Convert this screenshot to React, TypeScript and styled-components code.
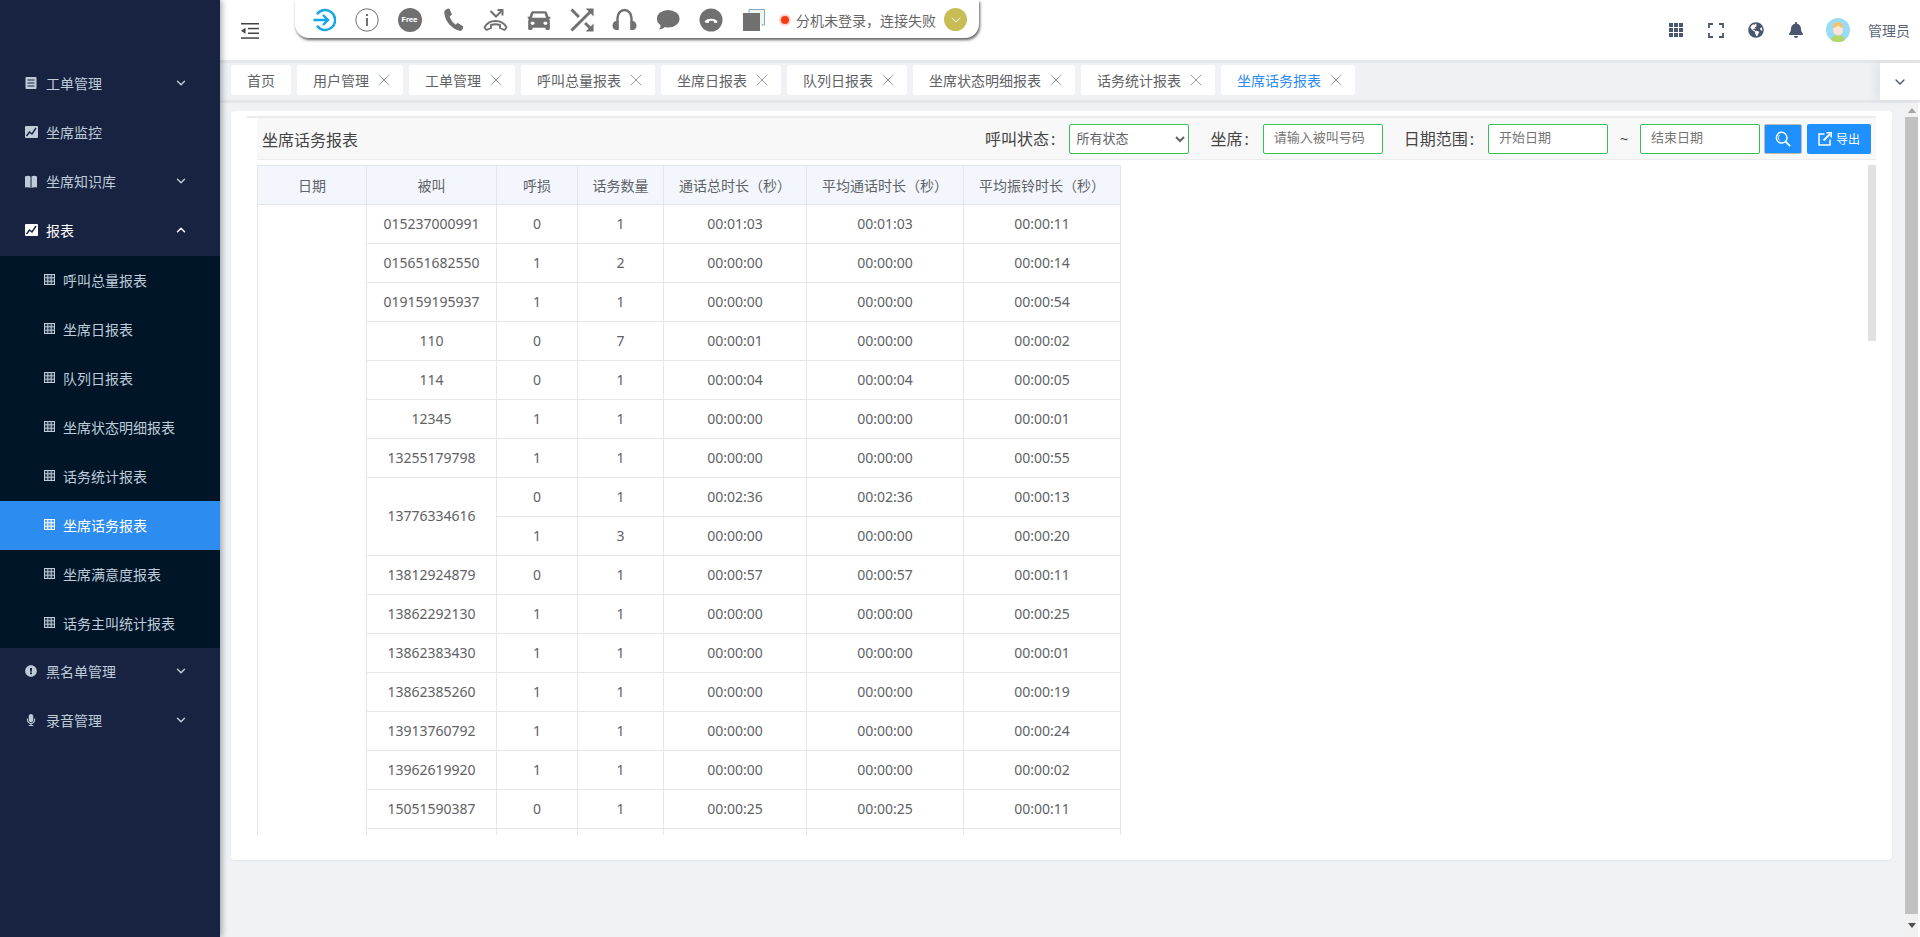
import React from "react";
import styled, {createGlobalStyle} from "styled-components";
import {ChevronDown, ChevronUp, X} from "lucide-react";
import {FaBell, FaExclamationCircle, FaGlobeAmericas, FaMicrophone} from "react-icons/fa";

const GlobalStyle = createGlobalStyle`
  html, body {
    margin: 0;
    height: 100%;
    overflow: hidden;
  }

  body {
    font-family: "Noto Sans", "Noto Sans CJK SC", sans-serif;
    font-size: 14px;
    color: #606266;
    background: #f0f2f5;
  }

  * {
    box-sizing: border-box;
  }
`

// icons
const GRAY = "#707070";

const DocIcon = () => (
    <svg width="12" height="12" viewBox="0 0 12 12">
        <rect x="0.5" width="11" height="12" rx="1" fill="currentColor"/>
        <path d="M2.5 3h7M2.5 6h7M2.5 9h7" stroke="#172340" strokeWidth="1"/>
    </svg>
);

const ChartIcon = () => (
    <svg width="13" height="12" viewBox="0 0 13 12">
        <rect width="13" height="12" rx="1" fill="currentColor"/>
        <path d="M1.5 10l3-4 2.5 2 4-6" stroke="#172340" strokeWidth="1.4" fill="none"/>
    </svg>
);

const BookIcon = () => (
    <svg width="12" height="13" viewBox="0 0 12 13" fill="currentColor">
        <path d="M0 1.500C2 .5 4 .5 5.500 1.500V13C4 12 2 12 0 12.500z"/>
        <path d="M12 1.500C10 .5 8 .5 6.500 1.500V13C8 12 10 12 12 12.500z"/>
    </svg>
);

const TableIcon = () => (
    <svg width="11" height="11" viewBox="0 0 11 11" fill="none" stroke="currentColor" strokeWidth="1">
        <rect x=".5" y=".5" width="10" height="10" fill="currentColor" fillOpacity=".2"/>
        <path d="M.5 3.800h10M.5 7.200h10M3.800.5v10M7.200.5v10"/>
    </svg>
);

const LoginIcon = () => (
    <svg width="24" height="24" viewBox="0 0 24 24" fill="none" stroke="#13a7ea" strokeWidth="2.4">
        <path d="M5 6.200A10 10 0 1 1 5 17.800"/>
        <path d="M1.500 12h14M11 7l5 5-5 5"/>
    </svg>
);

const InfoIcon = () => (
    <svg width="24" height="24" viewBox="0 0 24 24" fill="none">
        <circle cx="12" cy="12" r="11.200" stroke={GRAY} strokeWidth="1"/>
        <rect x="11" y="10" width="2" height="8" fill={GRAY}/>
        <rect x="11" y="6" width="2" height="2" fill={GRAY}/>
    </svg>
);

const PhoneIcon = () => (
    <svg width="24" height="24" viewBox="0 0 24 24" fill={GRAY} stroke={GRAY} strokeWidth="1" strokeLinejoin="round">
        <path d="M5.500 1.500l2.600-.5 2.400 5.600-2.300 1.600c.9 3.600 3.200 6.800 6.400 8.800l2.100-1.600 5.200 3.400-.8 2.400c-.4 1-1.600 1.400-2.700 1.100C10 20.100 4.300 12.500 3.800 4.700c-.1-1.400.5-2.800 1.700-3.200z"/>
    </svg>
);

const TransferIcon = () => (
    <svg width="25" height="24" viewBox="0 0 25 24" fill="none" stroke={GRAY}>
        <path d="M7.500 3l5.500 5.500L18.500 3" strokeWidth="2"/>
        <path d="M14.500 2H19.500v5.500" strokeWidth="2"/>
        <path d="M1.500 19.500C4 14.500 8 13 12.500 13s8.500 1.500 11 6.500l-2 2.500-4.500-2v-3c-3-1-6-1-9 0v3l-4.500 2z" strokeWidth="1.900" strokeLinejoin="round"/>
    </svg>
);

const CarIcon = () => (
    <svg width="26" height="22" viewBox="0 0 24 20" preserveAspectRatio="none" fill={GRAY}>
        <path d="M19.500 3.500C19.200 2.500 18.500 2 17.500 2h-11c-1 0-1.700.5-2 1.500L3.200 7H1.500v1.500l1 .5L2 11v7c0 .6.400 1 1 1h2c.6 0 1-.4 1-1v-1h12v1c0 .6.400 1 1 1h2c.6 0 1-.4 1-1v-7l-.5-2 1-.5V7h-1.700l-1.300-3.500zM6 14.500c-.9 0-1.800-.8-1.800-1.700S5 11.500 6 11.500s2 .4 2 1.300-1 1.700-2 1.700zm12 0c-1 0-2-.8-2-1.700s1-1.300 2-1.300 1.800.4 1.800 1.300-.9 1.700-1.800 1.700zM5.500 8l1.300-3.800h10.400L18.500 8h-13z"/>
    </svg>
);

const ShuffleIcon = () => (
    <svg width="26" height="26" viewBox="3 3 18 18" fill={GRAY}>
        <path d="M10.590 9.170L5.410 4 4 5.410l5.170 5.170 1.420-1.410zM14.500 4l2.040 2.040L4 18.590 5.410 20 17.960 7.460 20 9.500V4h-5.500zm.330 9.410l-1.410 1.410 3.130 3.130L14.500 20H20v-5.500l-2.040 2.040-3.130-3.130z"/>
    </svg>
);

const HeadsetIcon = () => (
    <svg width="25" height="24" viewBox="0 0 25 24" fill={GRAY}>
        <path d="M5.500 14V10a7 8 0 0 1 14 0v4" fill="none" stroke={GRAY} strokeWidth="2.400"/>
        <path d="M6.800 13v9H4.300C2 22 .5 20.500.5 17.800S2 13 4.300 13z"/>
        <path d="M18.200 13v9h2.500c2.300 0 3.800-1.500 3.800-4.200S23 13 20.700 13z"/>
    </svg>
);

const ChatIcon = () => (
    <svg width="24" height="22" viewBox="0 0 24 22" fill={GRAY}>
        <ellipse cx="12.200" cy="9.800" rx="11.300" ry="8.800"/>
        <path d="M4.500 15c.5 2-.3 4-1.500 5.500 3-.3 5-1.500 6.500-3z"/>
    </svg>
);

const HangupIcon = () => (
    <svg width="24" height="24" viewBox="0 0 24 24">
        <circle cx="12" cy="12" r="11.500" fill={GRAY}/>
        <path d="M5.500 13.500C7 11.500 9.500 10.800 12 10.800s5 .7 6.500 2.700l-.6 1.500-2.900-.2-.2-1.800c-1.500-.5-3-.5-4.600 0l-.2 1.800-2.900.2z" fill="#fff"/>
    </svg>
);

const CopyIcon = () => (
    <svg width="22" height="22" viewBox="0 0 22 22">
        <path d="M6 3.500V.5h15.500V16h-3" fill="#eef5ee" stroke="#7fa8c8" strokeWidth="1"/>
        <rect y="4" width="17" height="18" fill={GRAY}/>
    </svg>
);

const FoldIcon = () => (
    <svg width="18" height="16" viewBox="0 0 18 16" fill="#444">
        <rect width="18" height="1.500"/>
        <rect x="7" y="4.800" width="11" height="1.500"/>
        <rect x="7" y="9.500" width="11" height="1.500"/>
        <rect y="14.300" width="18" height="1.500"/>
        <path d="M0 7.700l4.500-3v6z"/>
    </svg>
);

const GridIcon = () => (
    <svg width="14" height="15" viewBox="0 0 14 15" fill="#4a5570">
        {[0, 5, 10].map((y) => [0, 5, 10].map((x) => (
            <rect key={`${x}-${y}`} x={x} y={y} width="4" height="4"/>
        )))}
    </svg>
);

const FullscreenIcon = () => (
    <svg width="16" height="15" viewBox="0 0 16 15" fill="none" stroke="#4a5570" strokeWidth="1.800">
        <path d="M1 5V1h4M11 1h4v4M15 10v4h-4M5 14H1v-4"/>
    </svg>
);

const AvatarIcon = () => (
    <svg width="24" height="24" viewBox="0 0 24 24">
        <circle cx="12" cy="12" r="12" fill="#9adcf5"/>
        <path d="M5 22c1-4 4-5 7-5s6 1 7 5a12 12 0 0 1-14 0z" fill="#b5d66a"/>
        <ellipse cx="12" cy="11.500" rx="5" ry="6" fill="#fde6d8"/>
        <path d="M7 10c0-4 2-6 5-6s5 2 5 6c-2 0-4-1-5-3-1 2-3 3-5 3z" fill="#f5c26b"/>
    </svg>
);

const SearchIcon = () => (
    <svg width="16" height="16" viewBox="0 0 18 18" fill="none" stroke="#fff">
        <circle cx="7.500" cy="7.500" r="6" strokeWidth="1.600"/>
        <path d="M5 4.500a4 4 0 0 0 0 6" strokeWidth="1"/>
        <path d="M12 12l5 5" strokeWidth="2.200"/>
    </svg>
);

const ExportIcon = () => (
    <svg width="14" height="14" viewBox="0 0 14 14" fill="none" stroke="#fff" strokeWidth="1.500">
        <path d="M6.500 2H1v11h11V7.500"/>
        <path d="M5.500 8.500L12 2" strokeWidth="1.800"/>
        <path d="M8.500 .8h4.700v4.700" strokeWidth="1.600"/>
    </svg>
);

// data
const menu = [
    {label: "工单管理", icon: <DocIcon/>, arrow: "down"},
    {label: "坐席监控", icon: <ChartIcon/>},
    {label: "坐席知识库", icon: <BookIcon/>, arrow: "down"},
    {label: "报表", icon: <ChartIcon/>, arrow: "up", active: true},
];

const subMenu = [
    "呼叫总量报表", "坐席日报表", "队列日报表", "坐席状态明细报表",
    "话务统计报表", "坐席话务报表", "坐席满意度报表", "话务主叫统计报表",
];

const menuBottom = [
    {label: "黑名单管理", icon: <FaExclamationCircle size={12}/>, arrow: "down"},
    {label: "录音管理", icon: <FaMicrophone size={12}/>, arrow: "down"},
];

const tabs = [
    {label: "首页"}, {label: "用户管理", close: true}, {label: "工单管理", close: true},
    {label: "呼叫总量报表", close: true}, {label: "坐席日报表", close: true},
    {label: "队列日报表", close: true}, {label: "坐席状态明细报表", close: true},
    {label: "话务统计报表", close: true}, {label: "坐席话务报表", close: true, active: true},
];

const columns = [
    {title: "日期", width: 109}, {title: "被叫", width: 130}, {title: "呼损", width: 81},
    {title: "话务数量", width: 86}, {title: "通话总时长（秒）", width: 143},
    {title: "平均通话时长（秒）", width: 157}, {title: "平均振铃时长（秒）", width: 157},
];

const Z = "00:00:00";
const rows: string[][] = [
    ["015237000991", "0", "1", "00:01:03", "00:01:03", "00:00:11"],
    ["015651682550", "1", "2", Z, Z, "00:00:14"],
    ["019159195937", "1", "1", Z, Z, "00:00:54"],
    ["110", "0", "7", "00:00:01", Z, "00:00:02"],
    ["114", "0", "1", "00:00:04", "00:00:04", "00:00:05"],
    ["12345", "1", "1", Z, Z, "00:00:01"],
    ["13255179798", "1", "1", Z, Z, "00:00:55"],
    ["13776334616", "0", "1", "00:02:36", "00:02:36", "00:00:13"],
    ["", "1", "3", Z, Z, "00:00:20"],
    ["13812924879", "0", "1", "00:00:57", "00:00:57", "00:00:11"],
    ["13862292130", "1", "1", Z, Z, "00:00:25"],
    ["13862383430", "1", "1", Z, Z, "00:00:01"],
    ["13862385260", "1", "1", Z, Z, "00:00:19"],
    ["13913760792", "1", "1", Z, Z, "00:00:24"],
    ["13962619920", "1", "1", Z, Z, "00:00:02"],
    ["15051590387", "0", "1", "00:00:25", "00:00:25", "00:00:11"],
    ["", "", "", "", "", ""],
];

const NavRow = ({item}: {item: {label: string, icon: React.ReactNode, arrow?: string, active?: boolean}}) => (
    <MenuItem $active={item.active}>
        <MenuIcon>{item.icon}</MenuIcon>
        {item.label}
        {item.arrow === "down" && <MenuArrow><ChevronDown size={14} strokeWidth={2.5}/></MenuArrow>}
        {item.arrow === "up" && <MenuArrow><ChevronUp size={14} strokeWidth={2.5}/></MenuArrow>}
    </MenuItem>
);

const App: React.FC = () => {
    return (
        <Layout>
            <GlobalStyle/>
            <Sidebar>
                {menu.map((item) => <NavRow key={item.label} item={item}/>)}
                <SubMenu>
                    {subMenu.map((label) => (
                        <SubItem key={label} $active={label === "坐席话务报表"}>
                            <TableIcon/>
                            {label}
                        </SubItem>
                    ))}
                </SubMenu>
                {menuBottom.map((item) => <NavRow key={item.label} item={item}/>)}
            </Sidebar>
            <Main>
                <Header>
                    <FoldButton><FoldIcon/></FoldButton>
                    <PhoneBar>
                        <PhoneSlot><LoginIcon/></PhoneSlot>
                        <PhoneSlot><InfoIcon/></PhoneSlot>
                        <PhoneSlot><FreeBadge>Free</FreeBadge></PhoneSlot>
                        <PhoneSlot><PhoneIcon/></PhoneSlot>
                        <PhoneSlot><TransferIcon/></PhoneSlot>
                        <PhoneSlot><CarIcon/></PhoneSlot>
                        <PhoneSlot><ShuffleIcon/></PhoneSlot>
                        <PhoneSlot><HeadsetIcon/></PhoneSlot>
                        <PhoneSlot><ChatIcon/></PhoneSlot>
                        <PhoneSlot><HangupIcon/></PhoneSlot>
                        <PhoneSlot><CopyIcon/></PhoneSlot>
                        <StatusDot/>
                        <StatusText>分机未登录，连接失败</StatusText>
                        <StatusToggle><ChevronDown size={16} strokeWidth={1.5}/></StatusToggle>
                    </PhoneBar>
                    <HeaderRight>
                        <HeaderIcon><GridIcon/></HeaderIcon>
                        <HeaderIcon><FullscreenIcon/></HeaderIcon>
                        <HeaderIcon><FaGlobeAmericas size={16}/></HeaderIcon>
                        <HeaderIcon><FaBell size={16}/></HeaderIcon>
                        <AvatarBox><AvatarIcon/></AvatarBox>
                        <UserName>管理员</UserName>
                    </HeaderRight>
                </Header>
                <TabBar>
                    <TabList>
                        {tabs.map((tab) => (
                            <Tab key={tab.label} $active={tab.active}>
                                {tab.label}
                                {tab.close && <TabClose><X size={20} strokeWidth={1.1}/></TabClose>}
                            </Tab>
                        ))}
                    </TabList>
                    <TabMenu><ChevronDown size={16} strokeWidth={2}/></TabMenu>
                </TabBar>
                <Content>
                    <Card>
                        <Panel>
                            <FilterBar>
                                <PageTitle>坐席话务报表</PageTitle>
                                <FilterLabel>呼叫状态<Colon>:</Colon></FilterLabel>
                                <StatusSelect defaultValue="all">
                                    <option value="all">所有状态</option>
                                </StatusSelect>
                                <FilterLabel $left={21}>坐席<Colon>:</Colon></FilterLabel>
                                <FilterInput placeholder="请输入被叫号码"/>
                                <FilterLabel $left={21}>日期范围<Colon>:</Colon></FilterLabel>
                                <FilterInput placeholder="开始日期"/>
                                <Tilde>~</Tilde>
                                <FilterInput placeholder="结束日期"/>
                                <SearchButton><SearchIcon/></SearchButton>
                                <ExportButton><ExportIcon/>导出</ExportButton>
                            </FilterBar>
                            <TableWrap>
                                <ReportTable>
                                    <colgroup>
                                        {columns.map((c) => <col key={c.title} width={c.width}/>)}
                                    </colgroup>
                                    <thead>
                                    <tr>
                                        {columns.map((c) => <th key={c.title}>{c.title}</th>)}
                                    </tr>
                                    </thead>
                                    <tbody>
                                    {rows.map((row, i) => (
                                        <tr key={i}>
                                            {i === 0 && <td rowSpan={rows.length}/>}
                                            {i === 7 && <td rowSpan={2}>{row[0]}</td>}
                                            {i !== 7 && i !== 8 && <td>{row[0]}</td>}
                                            {row.slice(1).map((cell, j) => <td key={j}>{cell}</td>)}
                                        </tr>
                                    ))}
                                    </tbody>
                                </ReportTable>
                                <TableThumb/>
                            </TableWrap>
                        </Panel>
                    </Card>
                    <PageRail>
                        <RailArrow $up/>
                        <RailThumb/>
                        <RailArrow/>
                    </PageRail>
                </Content>
            </Main>
        </Layout>
    );
}

const Layout = styled.div`
  display: flex;
  height: 937px;
  overflow: hidden;
`

const Sidebar = styled.aside`
  flex: 0 0 220px;
  padding-top: 60px;
  background: #172340;
  box-shadow: 2px 0 6px rgba(0, 21, 41, 0.35);
  position: relative;
  z-index: 2;
`

const MenuItem = styled.div<{ $active?: boolean }>`
  display: flex;
  align-items: center;
  height: 49px;
  padding: 0 32px 3px 25px;
  color: ${(p) => (p.$active ? "#fff" : "#bfcbd9")};
`

const MenuIcon = styled.span`
  display: flex;
  width: 21px;
`

const MenuArrow = styled.span`
  display: flex;
  margin-left: auto;
`

const SubMenu = styled.div`
  background: #001528;
`

const SubItem = styled.div<{ $active?: boolean }>`
  display: flex;
  align-items: center;
  gap: 8px;
  height: 49px;
  padding: 0 0 2px 44px;
  color: ${(p) => (p.$active ? "#fff" : "#bfcbd9")};
  background: ${(p) => (p.$active ? "#2d8cf0" : "transparent")};
`

const Main = styled.div`
  flex: 1;
  min-width: 0;
  display: flex;
  flex-direction: column;
`

const Header = styled.header`
  flex: 0 0 60px;
  display: flex;
  background: #fff;
  position: relative;
`

const FoldButton = styled.div`
  display: flex;
  margin: 23px 36px 0 21px;
`

const PhoneBar = styled.div`
  display: flex;
  align-items: center;
  height: 38px;
  padding: 1px 12px 0 7px;
  background: #fff;
  border-radius: 0 0 14px 14px;
  box-shadow: 1px 2px 3px rgba(40, 40, 40, 0.75);
`

const PhoneSlot = styled.span`
  flex: 0 0 43px;
  display: flex;
  justify-content: center;
`

const FreeBadge = styled.span`
  display: flex;
  align-items: center;
  justify-content: center;
  width: 24px;
  height: 24px;
  border-radius: 50%;
  background: #707070;
  color: #fff;
  font-family: Roboto, sans-serif;
  font-size: 8px;
  font-weight: 700;
`

const StatusDot = styled.span`
  width: 8px;
  height: 8px;
  margin: 0 7px 0 6px;
  border-radius: 50%;
  background: #f53c14;
  box-shadow: 0 0 0 2px #fbd5d0;
`

const StatusText = styled.span`
  white-space: nowrap;
  color: #666;
`

const StatusToggle = styled.span`
  display: flex;
  align-items: center;
  justify-content: center;
  width: 23px;
  height: 23px;
  margin-left: 8px;
  border-radius: 50%;
  background: #c8bd55;
  color: #fff;
`

const HeaderRight = styled.div`
  display: flex;
  align-items: center;
  margin-left: auto;
  padding-right: 10px;
`

const HeaderIcon = styled.span`
  display: flex;
  justify-content: center;
  width: 40px;
  color: #4a5570;
`

const AvatarBox = styled.span`
  display: flex;
  margin-left: 10px;
`

const UserName = styled.span`
  margin-left: 18px;
  color: #5a6478;
`

const TabBar = styled.div`
  flex: 0 0 43px;
  display: flex;
  background: #eff1f5;
  border-top: 3px solid #e4e6ea;
  border-bottom: 3px solid #e4e6ea;
`

const TabList = styled.div`
  flex: 1;
  display: flex;
  gap: 6px;
  padding: 2px 0 0 11px;
`

const Tab = styled.div<{ $active?: boolean }>`
  display: flex;
  align-items: center;
  gap: 9px;
  height: 30px;
  padding: 0 16px;
  background: #fff;
  border-radius: 3px;
  white-space: nowrap;
  color: ${(p) => (p.$active ? "#2d8cf0" : "#606266")};
`

const TabClose = styled.span`
  display: flex;
  justify-content: center;
  width: 11px;
  margin-right: -2px;
  color: #909399;

  svg {
    flex: none;
  }
`

const TabMenu = styled.div`
  flex: 0 0 40px;
  display: flex;
  align-items: center;
  justify-content: center;
  background: #fff;
  color: #4a5570;
  box-shadow: -6px 0 8px rgba(0, 0, 0, 0.05);
`

const Content = styled.div`
  flex: 1;
  padding: 8px 28px 0 11px;
  position: relative;
  overflow: hidden;
`

const Card = styled.div`
  height: 749px;
  padding: 5px 16px 0;
  background: #fff;
  border-radius: 4px;
  box-shadow: 0 1px 2px rgba(0, 0, 0, 0.06);
`

const Panel = styled.div`
  padding-left: 10px;
  border-top: 2px solid #ececec;
`

const FilterBar = styled.div`
  display: flex;
  align-items: center;
  height: 42px;
  padding: 0 5px;
  margin-bottom: 5px;
  background: #f8f8f8;
  border-bottom: 1px solid #ececec;
`

const PageTitle = styled.div`
  margin-right: auto;
  font-size: 16px;
  color: #444;
`

const FilterLabel = styled.label<{ $left?: number }>`
  margin: 0 14px 2px ${(p) => p.$left || 0}px;
  font-size: 16px;
  color: #444;
`

const Colon = styled.span`
  margin-left: 2px;
`

const StatusSelect = styled.select`
  width: 120px;
  height: 30px;
  padding: 0 2px 2px;
  background: #fff;
  border: 1px solid #35c25a;
  border-radius: 2px;
  font-family: inherit;
  font-size: 13px;
  color: #606266;
  outline: none;
`

const FilterInput = styled.input`
  width: 120px;
  height: 30px;
  padding: 0 10px 3px;
  background: #fff;
  border: 1px solid #35c25a;
  border-radius: 2px;
  font-family: inherit;
  font-size: 13px;
  outline: none;

  &::placeholder {
    color: #757575;
  }
`

const Tilde = styled.span`
  width: 32px;
  text-align: center;
  color: #444;
`

const SearchButton = styled.button`
  display: flex;
  align-items: center;
  justify-content: center;
  width: 38px;
  height: 30px;
  margin-left: 4px;
  padding: 0;
  background: #1e90ff;
  border: 1px solid #bbb;
  border-radius: 2px;
  color: #fff;
`

const ExportButton = styled.button`
  display: flex;
  align-items: center;
  justify-content: center;
  gap: 4px;
  width: 64px;
  height: 30px;
  margin-left: 5px;
  padding: 0;
  background: #1e90ff;
  border: 0;
  border-radius: 2px;
  font-family: inherit;
  font-size: 12px;
  color: #fff;
`

const TableWrap = styled.div`
  height: 670px;
  position: relative;
  overflow: hidden;
`

const ReportTable = styled.table`
  width: 863px;
  table-layout: fixed;
  border-collapse: collapse;
  text-align: center;

  th, td {
    height: 39px;
    padding: 0 0 2px;
    border: 1px solid #e5e6ea;
    font-weight: 400;
    color: #606266;
  }

  th {
    padding: 0;
    background: #f3f7fd;
  }
`

const TableThumb = styled.div`
  position: absolute;
  top: 0;
  right: 0;
  width: 8px;
  height: 176px;
  background: #e1e1e1;
`

const PageRail = styled.div`
  position: absolute;
  top: 0;
  right: 2px;
  bottom: 0;
  width: 13px;
  display: flex;
  flex-direction: column;
  box-shadow: 2px 0 0 #fff;
`

const RailThumb = styled.div`
  flex: 1;
  background: #c1c1c1;
`

const RailArrow = styled.div<{ $up?: boolean }>`
  flex: 0 0 ${(p) => (p.$up ? 14 : 23)}px;
  display: flex;
  align-items: center;
  justify-content: center;
  background: #f1f1f1;

  &::after {
    content: "";
    border-left: 4px solid transparent;
    border-right: 4px solid transparent;
    ${(p) => (p.$up ? "border-bottom: 5px solid #a3a3a3;" : "border-top: 5px solid #505050;")}
  }
`

export default App;
